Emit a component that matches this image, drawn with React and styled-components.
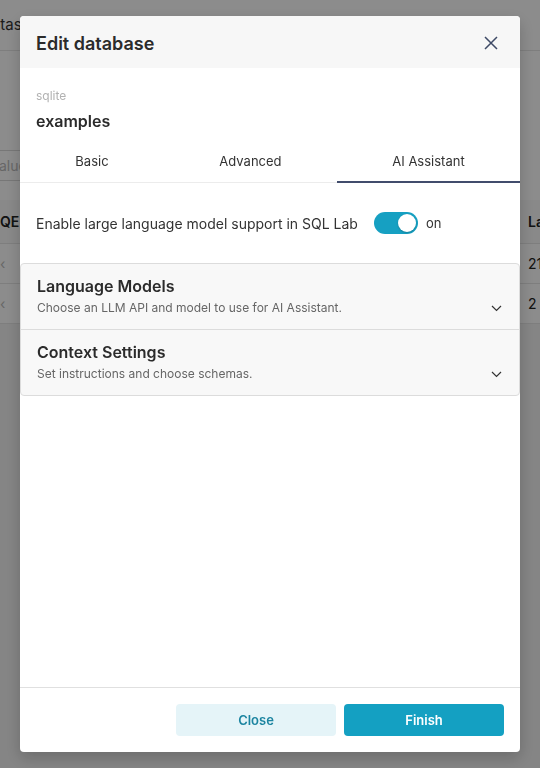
import React from 'react'
import styled, { createGlobalStyle } from 'styled-components'

const GlobalStyle = createGlobalStyle`
  html, body {
    margin: 0;
    padding: 0;
    background: #f2f2f2;
    font-family: Inter, "Noto Sans", sans-serif;
    color: #333;
  }
  * { box-sizing: border-box; }
`

// the page that sits behind the dimmed overlay
const Page = styled.div`
  width: 540px;
  height: 768px;
  overflow: hidden;
  background: #f2f2f2;
`

const TopBar = styled.div`
  height: 51px;
  display: flex;
  align-items: center;
  background: #fff;
  border-bottom: 1px solid #e6e6e6;
`

const PageTitle = styled.span`
  margin-left: -19px;
  margin-top: -2px;
  font-size: 15px;
  color: #333;
  white-space: nowrap;
`

const Filters = styled.div`
  height: 149px;
  padding-top: 99px;
  background: #fff;
`

const FilterInput = styled.div`
  width: 90px;
  height: 31px;
  margin-left: -32px;
  padding-left: 21px;
  display: flex;
  align-items: center;
  border: 1px solid #d9d9d9;
  font-size: 14px;
  color: #bbb;
`

const Table = styled.div`
  background: #fff;
`

const TableRow = styled.div`
  height: ${p => p.$h}px;
  display: flex;
  align-items: center;
  border-bottom: 1px solid #e6e6e6;
  background: ${p => (p.$head ? '#fafafa' : '#fff')};
  font-size: 14px;
  font-weight: ${p => (p.$head ? 600 : 400)};
  color: #222;
`

const Cell = styled.span`
  color: ${p => (p.$muted ? '#bbb' : '#222')};
  white-space: nowrap;
`

const EdgeCell = styled(Cell)`
  margin-left: auto;
  width: 12px;
`

const Overlay = styled.div`
  position: fixed;
  inset: 0;
  background: rgba(0, 0, 0, 0.45);
  display: flex;
  justify-content: center;
  padding-top: 16px;
`

const Modal = styled.div`
  width: 500px;
  height: 736px;
  display: flex;
  flex-direction: column;
  background: #fff;
  border-radius: 4px;
  overflow: hidden;
  box-shadow: 0 6px 16px rgba(0, 0, 0, 0.2);
`

const Header = styled.div`
  height: 52px;
  flex-shrink: 0;
  display: flex;
  align-items: center;
  justify-content: space-between;
  padding: 2px 22px 0 16px;
  background: #f7f7f7;
`

const Title = styled.h4`
  margin: 0;
  font-size: 18px;
  font-weight: 600;
  color: #2b2b2b;
`

const CloseIcon = styled.button`
  display: flex;
  padding: 0;
  border: 0;
  background: none;
  color: #3e4a66;
`

const Body = styled.div`
  flex: 1;
  display: flex;
  flex-direction: column;
`

const DbInfo = styled.div`
  padding: 20px 16px 0;
`

const Engine = styled.div`
  font-size: 12px;
  line-height: 16px;
  color: #b2b2b2;
`

const DbName = styled.div`
  margin-top: 5px;
  font-size: 16px;
  line-height: 24px;
  font-weight: 600;
  color: #2b2b2b;
`

const Tabs = styled.div`
  margin-top: 7px;
  display: flex;
  border-bottom: 1px solid #ececec;
`

const Tab = styled.div`
  flex: 1 1 auto;
  height: 43px;
  display: flex;
  align-items: center;
  justify-content: center;
  font-size: 13px;
  color: #333;
  border-bottom: 2px solid ${p => (p.$active ? '#414c6c' : 'transparent')};
  margin-bottom: -1px;
`

const SwitchRow = styled.div`
  display: flex;
  align-items: center;
  padding: 29px 16px 29px;
  font-size: 14px;
  color: #333;
`

const SwitchTrack = styled.span`
  width: 44px;
  height: 22px;
  margin-left: 16px;
  margin-right: 8px;
  border-radius: 11px;
  background: #16a0c2;
  display: flex;
  align-items: center;
  justify-content: flex-end;
  padding: 2px;
`

const SwitchKnob = styled.span`
  width: 18px;
  height: 18px;
  border-radius: 50%;
  background: #fff;
  box-shadow: 0 1px 2px rgba(0, 0, 0, 0.2);
`

const SwitchLabel = styled.span`
  font-size: 13px;
  color: #333;
`

const Collapse = styled.div`
  border: 1px solid #dcdcdc;
  border-radius: 4px;
  background: #f8f8f8;
`

const Panel = styled.div`
  display: flex;
  align-items: flex-end;
  justify-content: space-between;
  padding: 10px 17px 11px 16px;
  border-top: ${p => (p.$first ? 'none' : '1px solid #dcdcdc')};
`

const PanelTitle = styled.div`
  font-size: 16px;
  line-height: 24px;
  font-weight: 600;
  color: #2b2b2b;
`

const PanelDesc = styled.div`
  font-size: 12px;
  line-height: 20px;
  color: #666;
`

const Chevron = styled.svg`
  margin-bottom: 6px;
  color: #333;
`

const Spacer = styled.div`
  flex: 1;
`

const Footer = styled.div`
  flex-shrink: 0;
  display: flex;
  justify-content: flex-end;
  gap: 8px;
  padding: 16px;
  border-top: 1px solid #e0e0e0;
`

const Button = styled.button`
  width: 160px;
  height: 32px;
  border: 0;
  border-radius: 4px;
  font-family: Inter, "Noto Sans", sans-serif;
  font-size: 13px;
  font-weight: 600;
  background: ${p => (p.$primary ? '#14a0c2' : '#e5f4f8')};
  color: ${p => (p.$primary ? '#fff' : '#1b84a0')};
`

const panels = [
  { title: 'Language Models', desc: 'Choose an LLM API and model to use for AI Assistant.' },
  { title: 'Context Settings', desc: 'Set instructions and choose schemas.' },
]

const ChevronDown = () => (
  <Chevron width="11" height="7" viewBox="0 0 11 7" fill="none">
    <path d="M1 1l4.5 4.5L10 1" stroke="currentColor" strokeWidth="1.2" />
  </Chevron>
)

export default function App() {
  return (
    <>
      <GlobalStyle />
      <Page>
        <TopBar><PageTitle>Datasets</PageTitle></TopBar>
        <Filters><FilterInput>Value</FilterInput></Filters>
        <Table>
          <TableRow $head $h={44}><Cell>QE</Cell><EdgeCell>La</EdgeCell></TableRow>
          <TableRow $h={40}><Cell $muted>‹</Cell><EdgeCell>21</EdgeCell></TableRow>
          <TableRow $h={40}><Cell $muted>‹</Cell><EdgeCell>2</EdgeCell></TableRow>
        </Table>
      </Page>
      <Overlay>
        <Modal>
          <Header>
            <Title>Edit database</Title>
            <CloseIcon aria-label="close">
              <svg width="14" height="14" viewBox="0 0 14 14" fill="none">
                <path d="M1 1l12 12M13 1L1 13" stroke="currentColor" strokeWidth="1.5" />
              </svg>
            </CloseIcon>
          </Header>
          <Body>
            <DbInfo>
              <Engine>sqlite</Engine>
              <DbName>examples</DbName>
            </DbInfo>
            <Tabs>
              <Tab>Basic</Tab>
              <Tab>Advanced</Tab>
              <Tab $active>AI Assistant</Tab>
            </Tabs>
            <SwitchRow>
              Enable large language model support in SQL Lab
              <SwitchTrack><SwitchKnob /></SwitchTrack>
              <SwitchLabel>on</SwitchLabel>
            </SwitchRow>
            <Collapse>
              {panels.map((p, i) => (
                <Panel key={p.title} $first={i === 0}>
                  <div>
                    <PanelTitle>{p.title}</PanelTitle>
                    <PanelDesc>{p.desc}</PanelDesc>
                  </div>
                  <ChevronDown />
                </Panel>
              ))}
            </Collapse>
            <Spacer />
          </Body>
          <Footer>
            <Button>Close</Button>
            <Button $primary>Finish</Button>
          </Footer>
        </Modal>
      </Overlay>
    </>
  )
}
